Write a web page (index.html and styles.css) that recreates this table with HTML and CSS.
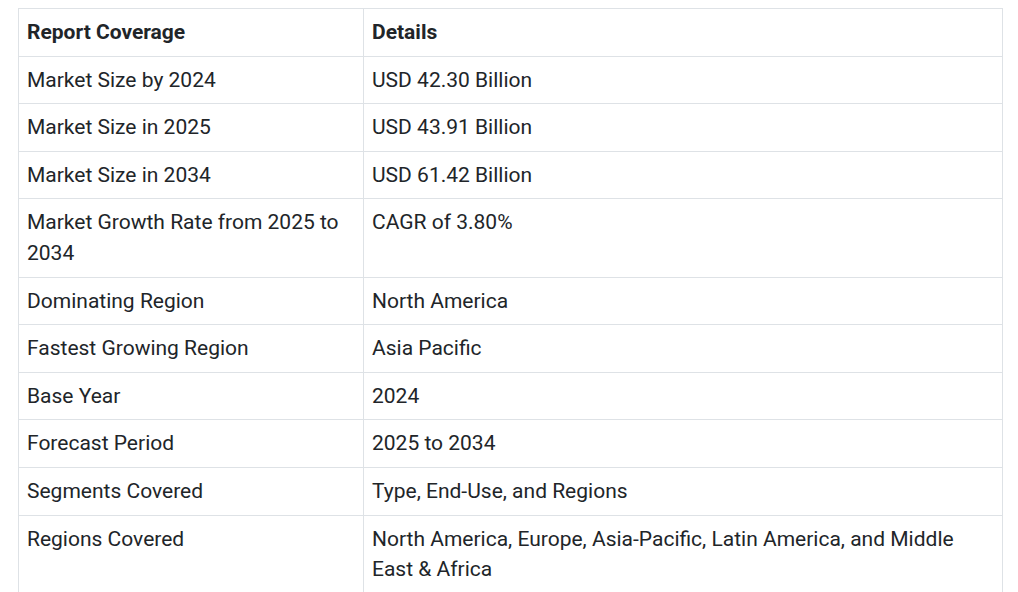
FILE: index.html
```html
<!DOCTYPE html>
<html>
<head>
<meta charset="utf-8">
<link rel="stylesheet" href="styles.css">
</head>
<body>
<div class="wrap">
<table class="report">
<thead>
<tr><th class="c1">Report Coverage</th><th>Details</th></tr>
</thead>
<tbody>
<tr><td>Market Size by 2024</td><td>USD 42.30 Billion</td></tr>
<tr><td>Market Size in 2025</td><td>USD 43.91 Billion</td></tr>
<tr><td>Market Size in 2034</td><td>USD 61.42 Billion</td></tr>
<tr><td>Market Growth Rate from 2025 to 2034</td><td>CAGR of 3.80%</td></tr>
<tr><td>Dominating Region</td><td>North America</td></tr>
<tr><td>Fastest Growing Region</td><td>Asia Pacific</td></tr>
<tr><td>Base Year</td><td>2024</td></tr>
<tr><td>Forecast Period</td><td>2025 to 2034</td></tr>
<tr><td>Segments Covered</td><td>Type, End-Use, and Regions</td></tr>
<tr><td>Regions Covered</td><td>North America, Europe, Asia-Pacific, Latin America, and Middle East &amp; Africa</td></tr>
</tbody>
</table>
</div>
</body>
</html>
```
FILE: styles.css
```css
html, body { margin: 0; padding: 0; background: #fff; }
.wrap { padding: 8px 16px 0 18px; }
.report {
  width: 985px;
  border-collapse: collapse;
  font-family: Roboto, "Liberation Sans", sans-serif;
  font-size: 21px;
  line-height: 30.6px;
  color: #212529;
  table-layout: fixed;
}
.report th, .report td {
  border: 1px solid #dee2e6;
  padding: 8px 8px;
  text-align: left;
  vertical-align: top;
}
.report th { font-weight: 700; }
.report .c1 { width: 328px; }
```
